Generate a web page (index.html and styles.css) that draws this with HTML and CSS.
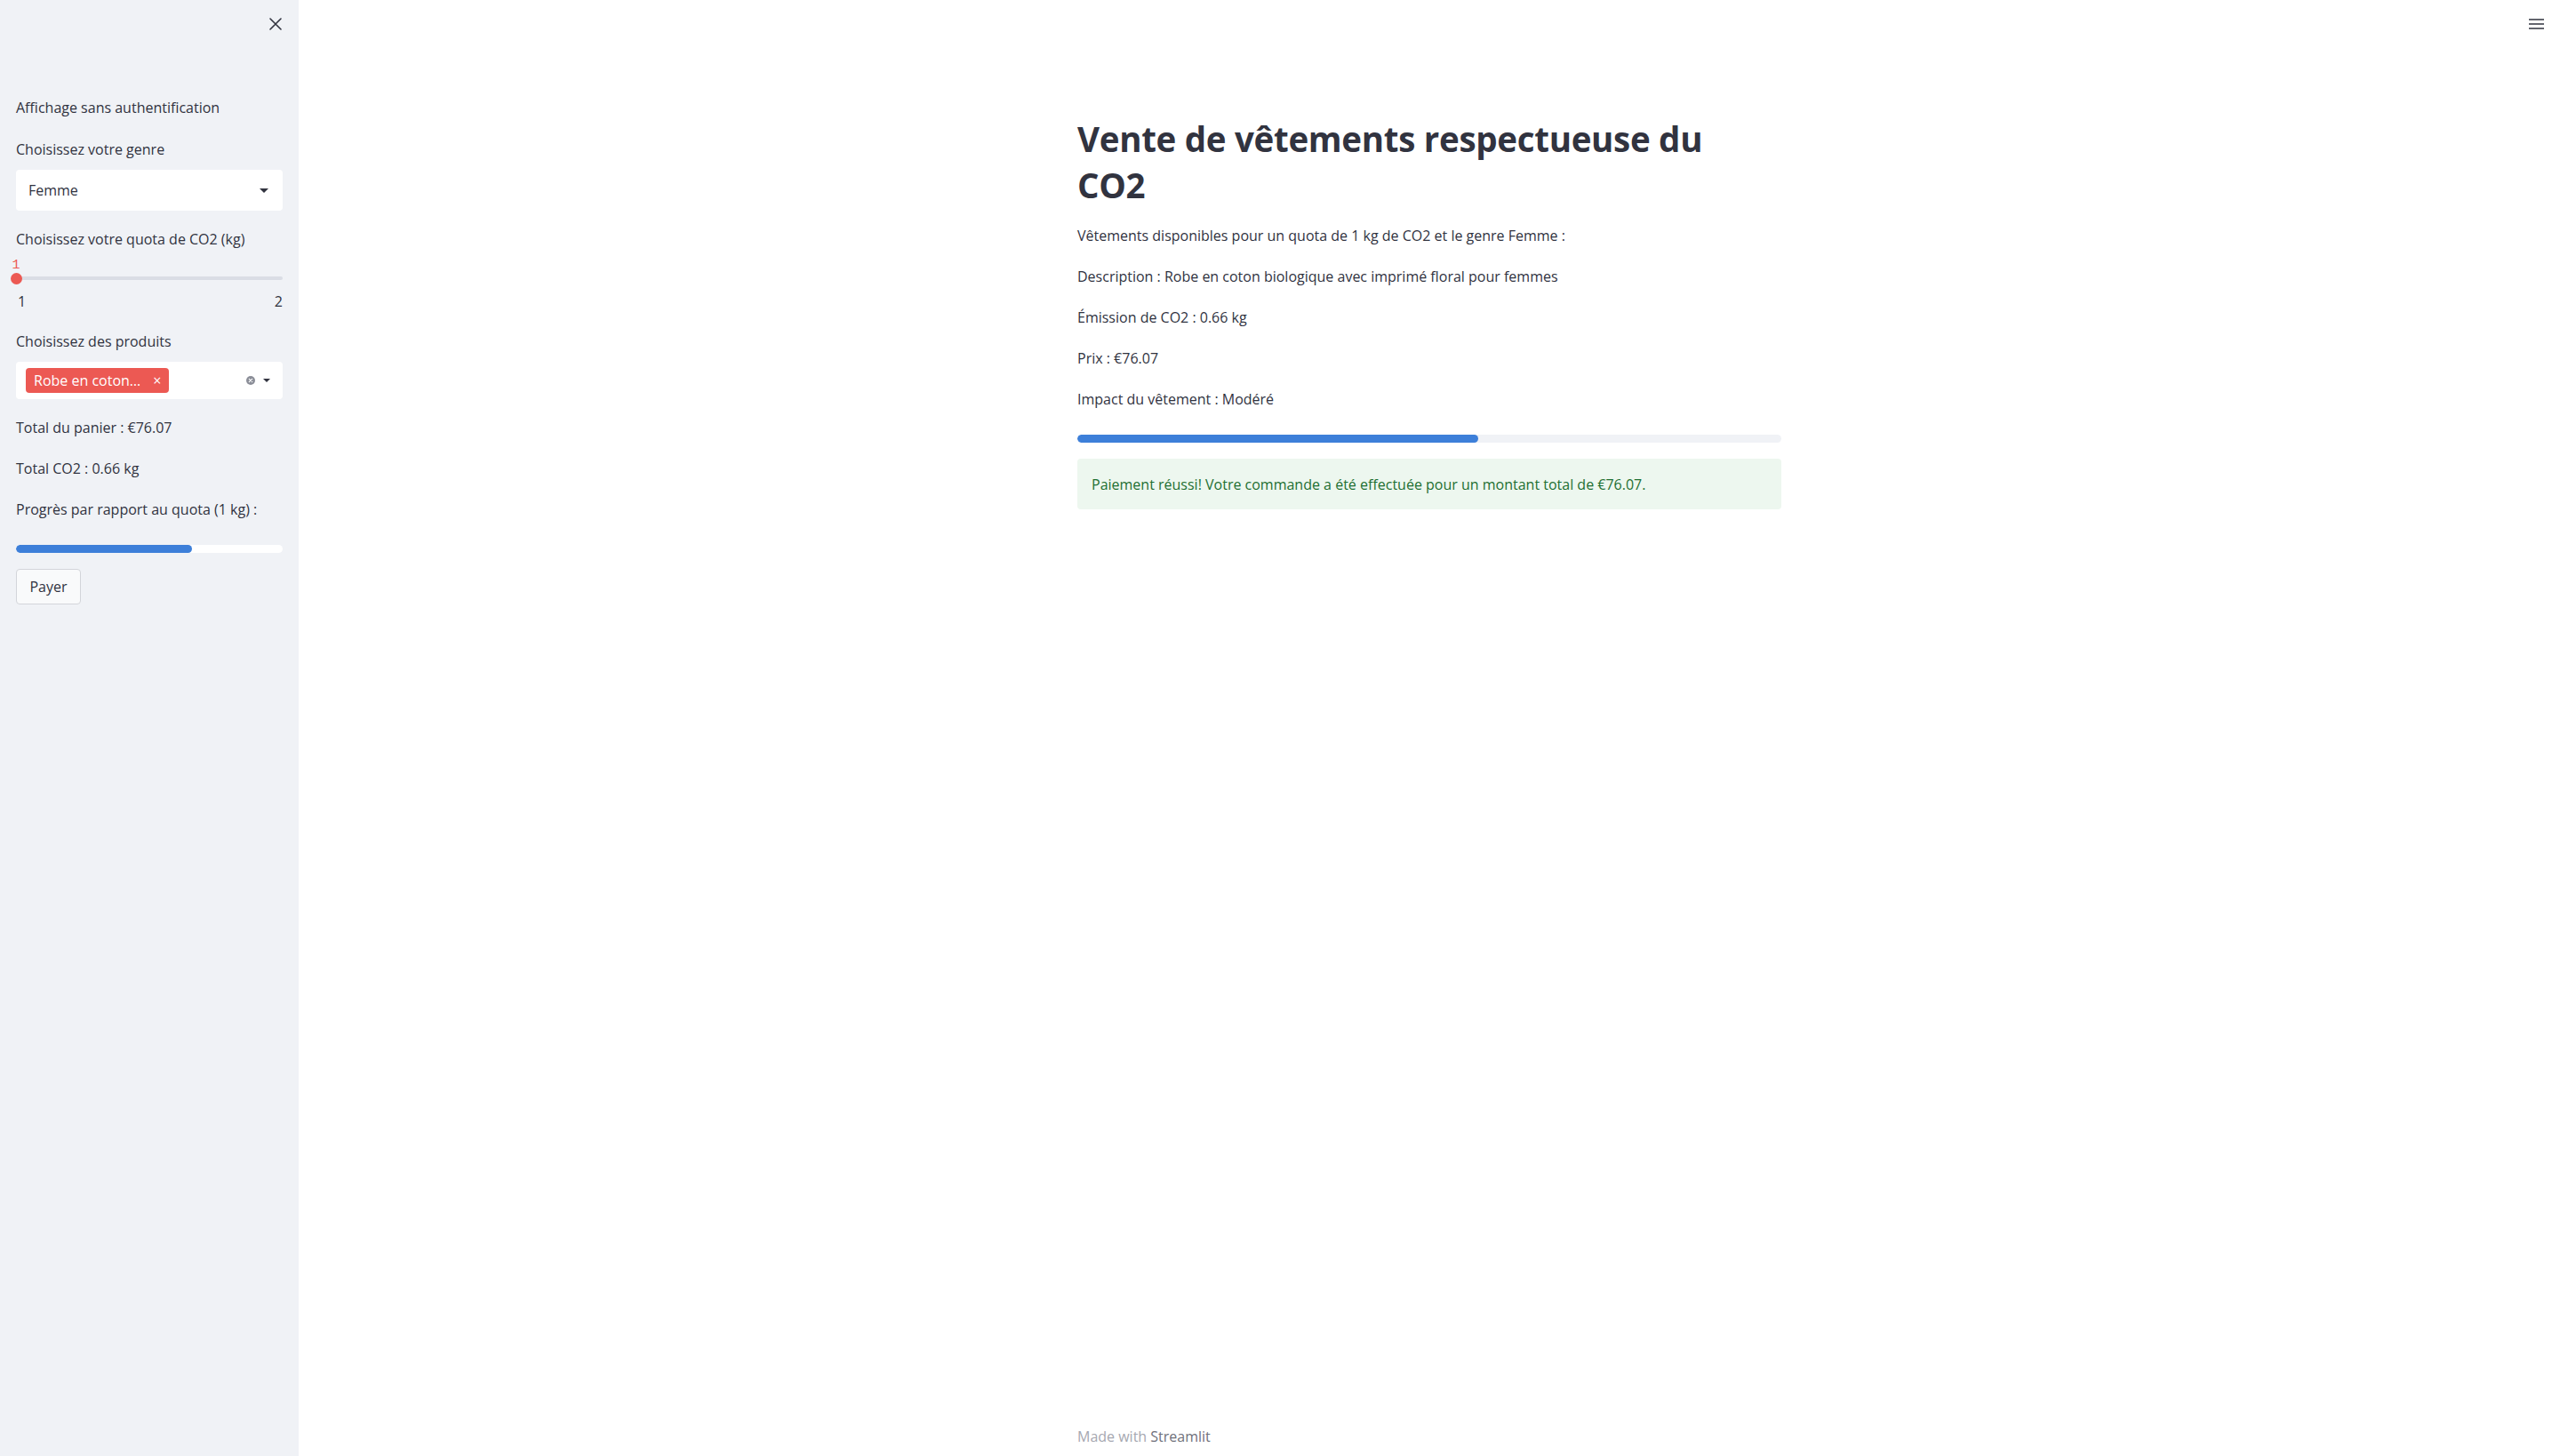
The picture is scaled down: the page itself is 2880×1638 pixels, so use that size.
FILE: index.html
```html
<!DOCTYPE html>
<html lang="fr">
<head>
<meta charset="utf-8">
<title>Vente de vêtements respectueuse du CO2</title>
<link rel="stylesheet" href="styles.css">
</head>
<body>
<div class="app">
  <aside class="sidebar">
    <div class="sidebar-header">
      <button class="icon-btn close-btn" aria-label="Fermer">
        <svg width="14" height="14" viewBox="0 0 14 14"><path d="M1 1L13 13M13 1L1 13" stroke="#31333f" stroke-width="1.6" stroke-linecap="round"/></svg>
      </button>
    </div>
    <p class="sb-text t-affichage">Affichage sans authentification</p>
    <label class="sb-text t-genre">Choisissez votre genre</label>
    <div class="select">
      <span>Femme</span>
      <svg class="caret" width="10" height="5" viewBox="0 0 10 5"><path d="M0 0H10L5 5Z" fill="#31333f"/></svg>
    </div>
    <label class="sb-text t-quota">Choisissez votre quota de CO2 (kg)</label>
    <div class="slider">
      <div class="slider-value">1</div>
      <div class="slider-track"><div class="slider-thumb"></div></div>
      <div class="slider-ticks"><span>1</span><span>2</span></div>
    </div>
    <label class="sb-text t-produits">Choisissez des produits</label>
    <div class="multiselect">
      <span class="tag"><span class="tag-text">Robe en coton…</span><span class="tag-x">×</span></span>
      <span class="ms-icons">
        <svg width="10" height="10" viewBox="0 0 10 10"><circle cx="5" cy="5" r="5" fill="#8b8e98"/><path d="M3.3 3.3L6.7 6.7M6.7 3.3L3.3 6.7" stroke="#fff" stroke-width="1.2" stroke-linecap="round"/></svg>
        <svg width="8" height="4" viewBox="0 0 8 4"><path d="M0 0H8L4 4Z" fill="#31333f"/></svg>
      </span>
    </div>
    <p class="sb-text t-panier">Total du panier : €76.07</p>
    <p class="sb-text t-co2">Total CO2 : 0.66 kg</p>
    <p class="sb-text t-progres">Progrès par rapport au quota (1 kg) :</p>
    <div class="progress sb-progress"><div class="progress-fill" style="width:66%"></div></div>
    <button class="btn">Payer</button>
  </aside>

  <main class="main">
    <div class="topbar">
      <button class="icon-btn" aria-label="Menu">
        <svg width="17" height="14" viewBox="0 0 17 14"><path d="M0 2H17M0 7H17M0 12H17" stroke="#31333f" stroke-width="1.6"/></svg>
      </button>
    </div>
    <div class="block">
      <h1>Vente de vêtements respectueuse du CO2</h1>
      <p class="first">Vêtements disponibles pour un quota de 1 kg de CO2 et le genre Femme :</p>
      <p>Description : Robe en coton biologique avec imprimé floral pour femmes</p>
      <p>Émission de CO2 : 0.66 kg</p>
      <p>Prix : €76.07</p>
      <p>Impact du vêtement : Modéré</p>
      <div class="progress main-progress"><div class="progress-fill" style="width:57%"></div></div>
      <div class="alert">Paiement réussi! Votre commande a été effectuée pour un montant total de €76.07.</div>
    </div>
    <footer class="footer">Made with <span class="footer-brand">Streamlit</span></footer>
  </main>
</div>
</body>
</html>
```

FILE: styles.css
```css
* { box-sizing: border-box; }
html, body { margin: 0; padding: 0; }
body {
  font-family: "Source Sans Pro", "Open Sans", "Noto Sans", sans-serif;
  font-size: 16px;
  color: #31333f;
  background: #ffffff;
}
.app { display: flex; min-height: 1638px; }

/* Sidebar */
.sidebar {
  width: 336px;
  flex: 0 0 336px;
  background: #f0f2f6;
  padding: 0 18px;
  display: flex;
  flex-direction: column;
  align-items: stretch;
}
.sidebar-header {
  height: 60px;
  display: flex;
  justify-content: flex-end;
  align-items: flex-start;
  padding-top: 20px;
  padding-right: 1px;
}
.icon-btn {
  border: 0;
  background: none;
  padding: 0;
  margin: 0;
  display: block;
  line-height: 0;
  cursor: pointer;
}
.sb-text { display: block; margin: 0; line-height: 24px; }
.t-affichage { margin-top: 49px; }
.t-genre { margin-top: 23px; }
.select {
  margin-top: 11px;
  height: 46px;
  background: #ffffff;
  border-radius: 4px;
  display: flex;
  align-items: center;
  justify-content: space-between;
  padding: 0 16px 0 14px;
}
.select .caret { margin-top: 1px; }
.t-quota { margin-top: 20px; }

.slider { display: flex; flex-direction: column; }
.slider-value {
  margin-top: 10px;
  width: 20px;
  margin-left: -10px;
  text-align: center;
  height: 16px;
  line-height: 16px;
  font-family: "Liberation Mono", "DejaVu Sans Mono", monospace;
  font-size: 15px;
  color: #ec5953;
}
.slider-track {
  position: relative;
  margin-top: 4px;
  height: 4px;
  border-radius: 2px;
  background: #dadde5;
}
.slider-thumb {
  position: absolute;
  left: -6px;
  top: -4.5px;
  width: 13px;
  height: 13px;
  border-radius: 50%;
  background: #ec5953;
}
.slider-ticks {
  margin-top: 14px;
  height: 20px;
  line-height: 20px;
  display: flex;
  justify-content: space-between;
  font-size: 16px;
  padding-left: 2px;
}
.t-produits { margin-top: 23px; }
.multiselect {
  margin-top: 11px;
  height: 42px;
  background: #ffffff;
  border-radius: 4px;
  display: flex;
  align-items: center;
  padding: 0 14px 0 11px;
}
.tag {
  height: 28px;
  background: #ec5953;
  color: #ffffff;
  border-radius: 4px;
  display: flex;
  align-items: center;
  padding: 0 9px;
  gap: 14px;
}
.tag-text { line-height: 28px; }
.tag-x { font-size: 16px; line-height: 28px; }
.ms-icons {
  margin-left: auto;
  display: flex;
  align-items: center;
  gap: 9px;
}
.t-panier { margin-top: 20px; }
.t-co2 { margin-top: 22px; }
.t-progres { margin-top: 22px; }

.progress {
  height: 9px;
  border-radius: 5px;
  overflow: hidden;
  display: flex;
}
.progress-fill {
  height: 100%;
  background: #3d7fd9;
  border-radius: 5px;
}
.sb-progress { margin-top: 28px; background: #ffffff; }

.btn {
  align-self: flex-start;
  margin-top: 18px;
  height: 40px;
  width: 73px;
  padding: 0;
  font-family: inherit;
  font-size: 16px;
  color: #31333f;
  background: #f9fafb;
  border: 1px solid #d3d5da;
  border-radius: 4px;
}

/* Main */
.main {
  flex: 1;
  display: flex;
  flex-direction: column;
  min-height: 1638px;
}
.topbar {
  height: 54px;
  display: flex;
  justify-content: flex-end;
  align-items: flex-start;
  padding: 20px 18px 0 0;
}
.block {
  width: 792px;
  margin: 0 auto;
  padding-top: 76px;
  flex: 1;
}
h1 {
  margin: 0;
  max-width: 760px;
  font-size: 38.5px;
  font-weight: 700;
  line-height: 52px;
  color: #31333f;
  letter-spacing: -0.3px;
}
.block p { margin: 22px 0 0; line-height: 24px; }
.block p.first { margin-top: 19px; }
.main-progress { margin-top: 28px; background: #f0f2f6; }
.alert {
  margin-top: 18px;
  padding: 17px 16px 15px;
  line-height: 25px;
  background: #edf7ef;
  color: #1e6f32;
  border-radius: 4px;
}
.footer {
  width: 792px;
  margin: 0 auto;
  line-height: 24px;
  padding-bottom: 10px;
  color: #a6a8b1;
}
.footer-brand { color: #6f717b; }
```
